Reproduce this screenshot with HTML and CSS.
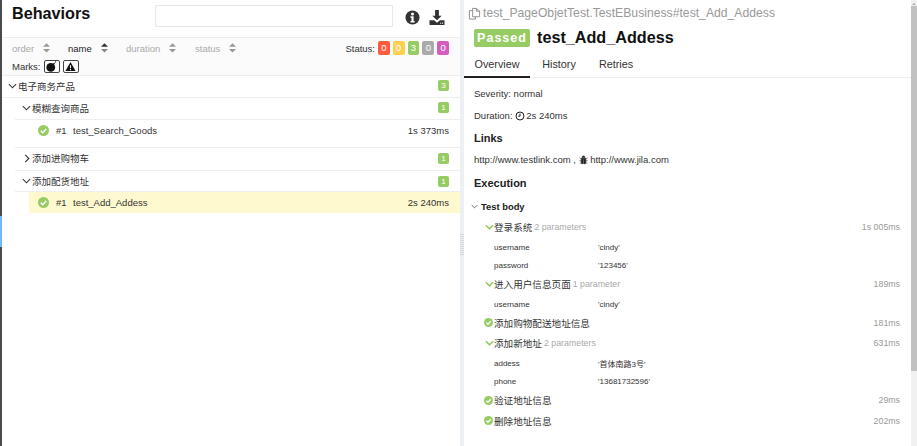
FILE: index.html
```html
<!DOCTYPE html>
<html lang="zh">
<head>
<meta charset="utf-8">
<title>Behaviors</title>
<link rel="stylesheet" href="styles.css">
</head>
<body>
<div class="app">
  <nav class="rail"><div class="rail-active"></div></nav>
  <section class="left">
    <header class="left-head">
      <h1 class="title">Behaviors</h1>
      <input class="search" type="text">
      <svg class="head-icon info" viewBox="0 0 16 16"><circle cx="8" cy="8" r="7.5" fill="#333"/><circle cx="8" cy="4.2" r="1.6" fill="#fff"/><path d="M5.800 6.600h3.400v5h1.100v1.700H5.800v-1.700h1.100V8.300H5.800z" fill="#fff"/></svg>
      <svg class="head-icon download" viewBox="0 0 16 16"><path d="M6 0h4v6h3l-5 5-5-5h3z" fill="#333"/><path d="M0 11h5l3 2.500 3-2.500h5v5H0z" fill="#333"/><circle cx="12" cy="14" r=".6" fill="#fff"/><circle cx="14" cy="14" r=".6" fill="#fff"/></svg>
    </header>
    <div class="toolbar">
      <div class="tool-row">
        <span class="sort s-order">order <svg class="sort-ico" viewBox="0 0 8 11"><path d="M4 0l4 4H0zM0 6.500h8l-4 4z"/></svg></span>
        <span class="sort s-name">name <svg class="sort-ico" viewBox="0 0 8 11"><path d="M4 0l4 4H0z"/><path class="dim" d="M0 6.500h8l-4 4z"/></svg></span>
        <span class="sort s-duration">duration <svg class="sort-ico" viewBox="0 0 8 11"><path d="M4 0l4 4H0zM0 6.500h8l-4 4z"/></svg></span>
        <span class="sort s-status">status <svg class="sort-ico" viewBox="0 0 8 11"><path d="M4 0l4 4H0zM0 6.500h8l-4 4z"/></svg></span>
        <span class="status-label">Status:</span>
        <span class="pill failed">0</span><span class="pill broken">0</span><span class="pill passed">3</span><span class="pill skipped">0</span><span class="pill unknown">0</span>
      </div>
      <div class="tool-row marks">
        <span>Marks:</span>
        <span class="mark"><svg viewBox="0 0 12 12"><circle cx="5.200" cy="7" r="4.800" fill="#111"/><path d="M8 3.500l1.500-1.500M10 1l1 0" stroke="#111" stroke-width="1.200" fill="none"/></svg></span>
        <span class="mark"><svg viewBox="0 0 12 12"><path d="M6 1l5.500 10H.5z" fill="#111"/><path d="M5.400 4.500h1.200v3.500H5.400zM5.400 8.800h1.200v1.200H5.400z" fill="#fff"/></svg></span>
      </div>
    </div>
    <div class="tree">
      <div class="group"><svg class="chev" viewBox="0 0 10 6"><path d="M1 1l4 4 4-4"/></svg><span class="name">电子商务产品</span><span class="count">3</span></div>
      <div class="sub">
        <div class="group"><svg class="chev" viewBox="0 0 10 6"><path d="M1 1l4 4 4-4"/></svg><span class="name">模糊查询商品</span><span class="count">1</span></div>
        <div class="leaf spaced"><svg class="ok" viewBox="0 0 12 12"><circle cx="6" cy="6" r="6"/><path d="M3 6.200l2.200 2.200L9 4.400"/></svg><span class="num">#1</span><span class="name">test_Search_Goods</span><span class="dur">1s 373ms</span></div>
        <div class="group tall"><svg class="chev chev-side" viewBox="0 0 6 10"><path d="M1 1l4 4-4 4"/></svg><span class="name">添加进购物车</span><span class="count">1</span></div>
        <div class="group short"><svg class="chev" viewBox="0 0 10 6"><path d="M1 1l4 4 4-4"/></svg><span class="name">添加配货地址</span><span class="count">1</span></div>
        <div class="leaf selected"><svg class="ok" viewBox="0 0 12 12"><circle cx="6" cy="6" r="6"/><path d="M3 6.200l2.200 2.200L9 4.400"/></svg><span class="num">#1</span><span class="name">test_Add_Addess</span><span class="dur">2s 240ms</span></div>
      </div>
    </div>
  </section>
  <div class="gutter"><div class="grip"></div></div>
  <section class="right">
    <div class="path"><svg class="copy" viewBox="0 0 14 14"><path d="M5 1.500h4l3.500 3v6H5zM5 4H1.500v9H8v-2.500M9 1.500v3h3.500"/></svg>test_PageObjetTest.TestEBusiness#test_Add_Addess</div>
    <div class="heading"><span class="badge">Passed</span><span class="test-name">test_Add_Addess</span></div>
    <div class="tabs"><span class="tab active">Overview</span><span class="tab">History</span><span class="tab">Retries</span></div>
    <div class="body">
      <p class="line sev">Severity: normal</p>
      <p class="line dura">Duration: <svg class="clock" viewBox="0 0 12 12"><circle cx="6" cy="6" r="4.800"/><path d="M6 3v3.200H3.800"/></svg> 2s 240ms</p>
      <h3 class="sec links-h">Links</h3>
      <p class="line links">http://www.testlink.com , <svg class="bug" viewBox="0 0 12 12"><path d="M4 2.500a2 2 0 0 1 4 0zM3 3.500h6v6.500a1 1 0 0 1-1 1H6.500V5h-1v6H4a1 1 0 0 1-1-1zM.5 3l2 1.500M11.500 3l-2 1.500M.5 7H3M11.500 7H9M1 11l2-2M11 11L9 9" fill="#222" stroke="#222" stroke-width=".8"/></svg> http://www.jila.com</p>
      <h3 class="sec exec-h">Execution</h3>
      <div class="test-body"><svg class="tb-chev" viewBox="0 0 10 6"><path d="M1 1l4 4 4-4"/></svg>Test body</div>
      <div class="steps">
        <div class="step"><svg class="g-chev" viewBox="0 0 10 6"><path d="M1 1l4 4 4-4"/></svg><span class="step-name">登录系统</span><span class="params">2 parameters</span><span class="time">1s 005ms</span></div>
        <div class="param"><span class="k">username</span><span>'cindy'</span></div>
        <div class="param"><span class="k">password</span><span>'123456'</span></div>
        <div class="step"><svg class="g-chev" viewBox="0 0 10 6"><path d="M1 1l4 4 4-4"/></svg><span class="step-name">进入用户信息页面</span><span class="params">1 parameter</span><span class="time">189ms</span></div>
        <div class="param"><span class="k">username</span><span>'cindy'</span></div>
        <div class="step"><svg class="s-ok" viewBox="0 0 12 12"><circle cx="6" cy="6" r="6"/><path d="M3 6.200l2.200 2.200L9 4.400"/></svg><span class="step-name">添加购物配送地址信息</span><span class="time">181ms</span></div>
        <div class="step"><svg class="g-chev" viewBox="0 0 10 6"><path d="M1 1l4 4 4-4"/></svg><span class="step-name">添加新地址</span><span class="params">2 parameters</span><span class="time">631ms</span></div>
        <div class="param"><span class="k">addess</span><span>'首体南路3号'</span></div>
        <div class="param"><span class="k">phone</span><span>'13681732596'</span></div>
        <div class="step"><svg class="s-ok" viewBox="0 0 12 12"><circle cx="6" cy="6" r="6"/><path d="M3 6.200l2.200 2.200L9 4.400"/></svg><span class="step-name">验证地址信息</span><span class="time">29ms</span></div>
        <div class="step"><svg class="s-ok" viewBox="0 0 12 12"><circle cx="6" cy="6" r="6"/><path d="M3 6.200l2.200 2.200L9 4.400"/></svg><span class="step-name">删除地址信息</span><span class="time">202ms</span></div>
      </div>
    </div>
  </section>
  <div class="scrollbar"><div class="arrow"></div><div class="thumb"></div></div>
</div>
</body>
</html>
```
FILE: styles.css
```css
* { box-sizing: border-box; }
html, body { margin: 0; padding: 0; height: 100%; overflow: hidden; background: #fff; }
body { font-family: "Liberation Sans", "Noto Sans CJK SC", sans-serif; font-size: 9.500px; color: #333; }
h1, h3, p { margin: 0; }

.app { display: flex; width: 917px; height: 446px; }

.rail { width: 2px; background: #4a4a4a; padding-top: 216px; flex: none; }
.rail-active { height: 31px; background: #6eb8fb; }

.left { width: 458px; flex: none; display: flex; flex-direction: column; }
.left-head { height: 38px; display: flex; align-items: flex-start; padding-left: 10px; border-bottom: 1px solid #eee; }
.title { font-size: 16.200px; font-weight: 700; color: #111; line-height: 20px; margin-top: 3px; width: 143px; }
.search { width: 238px; height: 22px; margin-top: 5px; border: 1px solid #e8e8e8; background: #fff; padding: 0; outline: none; }
.head-icon { flex: none; }
.info { width: 15px; height: 15px; margin: 10px 0 0 12px; }
.download { width: 16px; height: 15px; margin: 10px 0 0 9px; }

.toolbar { height: 38px; background: #fbfbfb; border-bottom: 1px solid #eee; padding: 0 11px 0 10px; }
.tool-row { display: flex; align-items: center; height: 18px; }
.tool-row:first-child { margin-top: 1px; }
.sort { color: #aaa; display: inline-flex; align-items: center; gap: 9px; }
.s-order { width: 56px; }
.s-name { width: 58px; color: #222; }
.s-duration { width: 69px; }
.s-status { flex: 1; }
.sort-ico { width: 7px; height: 10px; fill: #999; }
.s-name .sort-ico { fill: #333; }
.s-name .sort-ico .dim { fill: #888; }
.status-label { color: #333; margin-right: 3px; }
.pill { width: 11.800px; height: 13.500px; border-radius: 2px; color: #fff; font-size: 9.500px; line-height: 13.500px; text-align: center; margin-left: 3px; }
.status-label + .pill { margin-left: 0; }
.failed { background: #fd5a3e; }
.broken { background: #ffd050; }
.passed { background: #97cc64; }
.skipped { background: #aaa; }
.unknown { background: #d35ebe; }
.marks { gap: 3px; }
.mark { width: 16px; height: 13px; border: 1px solid #444; border-radius: 2px; background: #fff; display: flex; align-items: center; justify-content: center; }
.mark svg { width: 11px; height: 11px; }

.tree { flex: 1; }
.group { height: 22px; display: flex; align-items: center; padding: 0 11px 2px 6px; border-bottom: 1px solid #eee; }
.group.tall { height: 23px; }
.group.short { height: 21px; padding-bottom: 0; }
.sub { padding-left: 13px; }
.sub > .group { padding-left: 7px; }
.chev { width: 9px; height: 6px; fill: none; stroke: #333; stroke-width: 1.200; margin-right: 1px; flex: none; }
.chev-side { width: 6px; height: 9px; margin: 0 2px 0 2px; }
.name { flex: 1; color: #333; }
.count { width: 11px; height: 11px; background: #97cc64; border-radius: 2px; color: #fff; font-size: 8px; line-height: 11px; text-align: center; }
.leaf { display: flex; align-items: center; height: 22px; margin-left: 14px; padding: 0 11px 0 9px; }
.leaf.spaced { height: 28px; padding-bottom: 7px; border-bottom: 1px solid #eee; margin-left: 0; padding-left: 23px; }
.leaf.selected { background: #fef9cf; height: 21px; }
.ok { width: 11px; height: 11px; flex: none; margin-right: 7px; }
.ok circle, .s-ok circle { fill: #97cc64; }
.ok path, .s-ok path { fill: none; stroke: #fff; stroke-width: 1.700; }
.num { width: 17px; flex: none; }
.dur { color: #333; }

.gutter { width: 4px; flex: none; background: #ecf0f3; display: flex; align-items: center; }
.grip { width: 4px; height: 22px; margin-top: 44px; background: repeating-linear-gradient(to bottom, #d4d8db 0 1px, #ecf0f3 1px 2px); }

.right { flex: 1; min-width: 0; display: flex; flex-direction: column; }
.path { height: 27px; font-size: 12.200px; line-height: 27px; color: #999; white-space: nowrap; padding-left: 4px; display: flex; align-items: center; }
.copy { width: 13px; height: 13px; fill: none; stroke: #888; stroke-width: 1; margin-right: 2px; flex: none; }
.heading { height: 22px; display: flex; align-items: center; padding-left: 10px; }
.badge { width: 56px; height: 18px; background: #97cc64; color: #fff; font-weight: 700; font-size: 12.500px; letter-spacing: 1px; line-height: 18px; text-align: center; border-radius: 2px; margin-right: 7px; }
.test-name { font-size: 16.200px; font-weight: 700; color: #111; line-height: 20px; margin-top: -2px; }
.tabs { height: 29px; display: flex; border-bottom: 1px solid #eee; }
.tab { line-height: 30px; font-size: 10.800px; color: #333; text-align: center; }
.tab:nth-child(1) { width: 66px; }
.tab:nth-child(2) { width: 58px; }
.tab:nth-child(3) { width: 56px; }
.tab.active { border-bottom: 2px solid #222; height: 29px; }

.body { padding: 0 11px 0 10px; }
.line { font-size: 9.500px; color: #333; line-height: 14px; }
.sev { margin-top: 9px; }
.dura { margin-top: 8px; display: flex; align-items: center; white-space: pre; }
.clock { width: 10px; height: 10px; fill: none; stroke: #222; stroke-width: 1.200; margin-right: -1.500px; }
.sec { font-size: 11px; font-weight: 700; color: #222; line-height: 14px; }
.links-h { margin-top: 8px; }
.links { margin-top: 8px; display: flex; align-items: center; white-space: pre; }
.bug { width: 9px; height: 10px; }
.exec-h { margin-top: 9px; }
.test-body { font-size: 9.400px; font-weight: 700; color: #222; display: flex; align-items: center; height: 14px; margin-top: 9px; }
.tb-chev { width: 7px; height: 5px; margin: 0 3px 0 -3px; fill: none; stroke: #333; stroke-width: 1; }
.steps { margin-top: 3.600px; padding-left: 10px; }
.step { display: flex; align-items: center; height: 20.800px; }
.g-chev { width: 9px; height: 6px; fill: none; stroke: #97cc64; stroke-width: 1.800; flex: none; margin: 0 0 0 1px; }
.s-ok { width: 9px; height: 9px; flex: none; margin: 0 1px 0 0; }
.step-name { font-size: 9.600px; color: #333; }
.params { font-size: 8.800px; color: #aaa; margin-left: 2px; }
.time { margin-left: auto; font-size: 8.800px; color: #999; }
.param { display: flex; align-items: center; height: 18px; padding-top: 2px; font-size: 8px; color: #333; padding-left: 10px; }
.k { width: 104px; flex: none; }

.scrollbar { width: 6px; flex: none; background: #f1f1f1; }
.arrow { width: 0; height: 0; margin: 3px auto 0; border: 2px solid transparent; border-top: 0; border-bottom: 2px solid #a8a8a8; }
.thumb { height: 365px; background: #c1c1c1; margin-top: 1px; }
```
